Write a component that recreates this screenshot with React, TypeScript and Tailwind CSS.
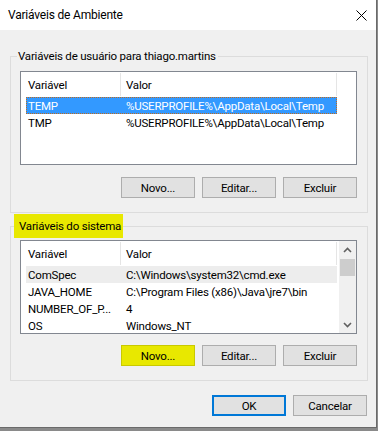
import React from "react";

type Row = { name: string; value: string; state?: "selected" | "inactive" };

const userVars: Row[] = [
  { name: "TEMP", value: "%USERPROFILE%\\AppData\\Local\\Temp", state: "selected" },
  { name: "TMP", value: "%USERPROFILE%\\AppData\\Local\\Temp" },
];

const systemVars: Row[] = [
  { name: "ComSpec", value: "C:\\Windows\\system32\\cmd.exe", state: "inactive" },
  { name: "JAVA_HOME", value: "C:\\Program Files (x86)\\Java\\jre7\\bin" },
  { name: "NUMBER_OF_P...", value: "4" },
  { name: "OS", value: "Windows_NT" },
];

function ListHeader() {
  return (
    <div className="flex h-[25px] w-[316px] shrink-0 items-center">
      <div className="w-[99px] pl-[7px]">Variável</div>
      <div className="my-[1px] w-px self-stretch bg-[#e5e5e5]" />
      <div className="flex-1 pl-[5px]">Valor</div>
      <div className="my-[1px] w-px self-stretch bg-[#e5e5e5]" />
    </div>
  );
}

function ListRow({ row }: { row: Row }) {
  const selected = row.state === "selected";
  return (
    <div
      className={
        "ml-[5px] flex h-[17px] w-[311px] shrink-0 items-center whitespace-nowrap " +
        (selected
          ? "border border-dotted border-[#c06a1c] bg-[#3399ff] text-white"
          : row.state === "inactive"
          ? "border border-transparent bg-[#ededed]"
          : "border border-transparent")
      }
    >
      <div className="w-[93px] shrink-0 pl-[1px]">{row.name}</div>
      <div className="flex-1 pl-[6px]">{row.value}</div>
    </div>
  );
}

function Chevron({ down }: { down?: boolean }) {
  return (
    <svg width="9" height="6" viewBox="0 0 9 6" className={down ? "rotate-180" : ""}>
      <polyline points="1,5 4.5,1.5 8,5" fill="none" stroke="#606060" strokeWidth="1.6" />
    </svg>
  );
}

function VarList({ rows, scroll }: { rows: Row[]; scroll?: boolean }) {
  return (
    <div className="flex h-[94px] w-[337px] overflow-hidden border border-[#828790] bg-white">
      <div className="flex flex-1 flex-col overflow-hidden">
        <ListHeader />
        {rows.map((r) => (
          <ListRow key={r.name} row={r} />
        ))}
      </div>
      {scroll && (
        <div className="flex w-[17px] shrink-0 flex-col bg-[#f0f0f0]">
          <div className="flex h-[17px] items-center justify-center">
            <Chevron />
          </div>
          <div className="mx-[1px] mt-[1px] h-[17px] bg-[#cdcdcd]" />
          <div className="flex-1" />
          <div className="flex h-[17px] items-center justify-center">
            <Chevron down />
          </div>
        </div>
      )}
    </div>
  );
}

function Button({ label, highlight, primary }: { label: string; highlight?: boolean; primary?: boolean }) {
  return (
    <button
      className={
        "h-[21px] w-[74px] text-black " +
        (primary
          ? "border-2 border-[#0078d7] bg-[#e1e1e1]"
          : highlight
          ? "border border-[#c9c900] bg-[#e8e800]"
          : "border border-[#adadad] bg-[#e1e1e1]")
      }
    >
      {label}
    </button>
  );
}

export default function App() {
  return (
    <div className="h-[431px] w-[378px] bg-[#8a8a8a] font-['Roboto',sans-serif] text-[11.5px] leading-[16px] tracking-[-0.2px] text-black">
      <div className="flex h-[428px] w-[377px] flex-col border-r border-b border-[#6a6a6a] bg-[#f0f0f0]">
        <div className="flex h-[30px] shrink-0 items-center justify-between bg-white pl-[8px] pr-[9px]">
          <span className="text-[12px]">Variáveis de Ambiente</span>
          <svg width="11" height="11" viewBox="0 0 11 11">
            <path d="M0.5 0.5 L10.5 10.5 M10.5 0.5 L0.5 10.5" stroke="#000" strokeWidth="1" />
          </svg>
        </div>

        <fieldset className="mr-[8px] ml-[10px] mt-[18px] border border-[#dcdcdc] pb-[14px]">
          <legend className="ml-[6px] pl-[1px] pr-[2px]">Variáveis de usuário para thiago.martins</legend>
          <div className="mt-[7px] pl-[9px]">
            <VarList rows={userVars} />
          </div>
          <div className="mt-[12px] flex justify-end gap-[7px] pr-[10px]">
            <Button label="Novo..." />
            <Button label="Editar..." />
            <Button label="Excluir" />
          </div>
        </fieldset>

        <fieldset className="mr-[8px] ml-[10px] mt-[1px] border border-[#dcdcdc] pb-[14px]">
          <legend className="ml-[3px] bg-[#e8e800] py-[4px] pl-[5px] pr-[2px]">Variáveis do sistema</legend>
          <div className="mt-[2px] pl-[9px]">
            <VarList rows={systemVars} scroll />
          </div>
          <div className="mt-[11px] flex justify-end gap-[7px] pr-[10px]">
            <Button label="Novo..." highlight />
            <Button label="Editar..." />
            <Button label="Excluir" />
          </div>
        </fieldset>

        <div className="mt-[14px] flex justify-end gap-[8px] pr-[10px]">
          <div className="w-[73px]">
            <Button label="OK" primary />
          </div>
          <div className="w-[73px]">
            <Button label="Cancelar" />
          </div>
        </div>
      </div>
    </div>
  );
}
